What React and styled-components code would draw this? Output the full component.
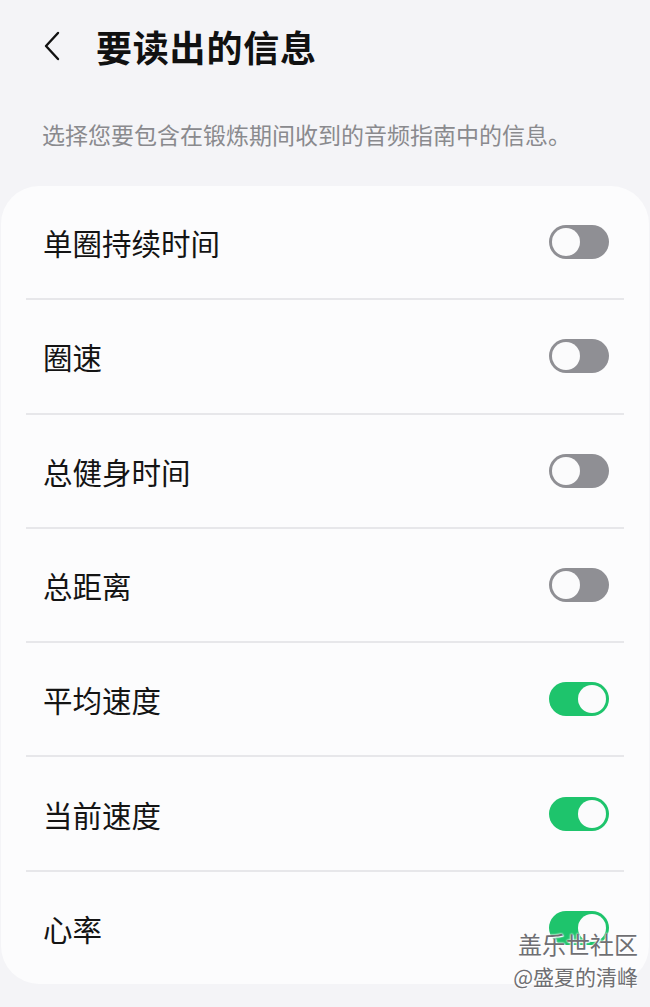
import React, { useState } from 'react';
import styled, { createGlobalStyle } from 'styled-components';

const ITEMS = [
  { id: 1, label: '单圈持续时间', on: false },
  { id: 2, label: '圈速', on: false },
  { id: 3, label: '总健身时间', on: false },
  { id: 4, label: '总距离', on: false },
  { id: 5, label: '平均速度', on: true },
  { id: 6, label: '当前速度', on: true },
  { id: 7, label: '心率', on: true },
];

function App() {
  const [items, setItems] = useState(ITEMS);

  const toggle = id => {
    setItems(prev => prev.map(el => (el.id === id ? { ...el, on: !el.on } : el)));
  };

  return (
    <Page>
      <GlobalStyle />
      <Header>
        <BackButton aria-label="返回">
          <svg width="18" height="30" viewBox="0 0 18 30" fill="none">
            <path d="M15 2 L3 15 L15 28" stroke="#111" strokeWidth="2.4" strokeLinecap="round" strokeLinejoin="round" />
          </svg>
        </BackButton>
        <Title>要读出的信息</Title>
      </Header>

      <Description>选择您要包含在锻炼期间收到的音频指南中的信息。</Description>

      <Card>
        {items.map((el, i) => (
          <Row key={el.id} $last={i === items.length - 1}>
            <Label>{el.label}</Label>
            <Switch $on={el.on} onClick={() => toggle(el.id)}>
              <Knob $on={el.on} />
            </Switch>
          </Row>
        ))}
      </Card>

      <Watermark>
        <WatermarkTitle>盖乐世社区</WatermarkTitle>
        <WatermarkUser>@盛夏的清峰</WatermarkUser>
      </Watermark>
    </Page>
  );
}

const GlobalStyle = createGlobalStyle`
  html, body {
    margin: 0;
    padding: 0;
    background: #f4f4f7;
  }
  body {
    font-family: "Noto Sans CJK SC", "Noto Sans", sans-serif;
  }
`;

const Page = styled.div`
  position: relative;
  width: 650px;
  height: 1007px;
  overflow: hidden;
  background: #f4f4f7;
`;

const Header = styled.div`
  display: flex;
  align-items: center;
  height: 92px;
  padding-left: 43px;
  box-sizing: border-box;
`;

const BackButton = styled.div`
  display: flex;
  align-items: center;
  width: 53px;
  height: 40px;
`;

const Title = styled.h1`
  margin: 0;
  font-size: 36px;
  font-weight: 700;
  color: #111;
  letter-spacing: 0.8px;
`;

const Description = styled.p`
  margin: 0;
  padding: 25px 0 0 42px;
  box-sizing: border-box;
  height: 94px;
  font-size: 23px;
  color: #8a8a8e;
`;

const Card = styled.div`
  margin: 0 1px;
  background: #fcfcfd;
  border-radius: 38px;
`;

const Row = styled.div`
  position: relative;
  display: flex;
  align-items: center;
  justify-content: space-between;
  height: 112.3px;
  padding: 0 40px 0 42px;
  border-bottom: ${({ $last }) => ($last ? 'none' : '2px solid transparent')};

  &::after {
    content: '';
    display: ${({ $last }) => ($last ? 'none' : 'block')};
    position: absolute;
    left: 25px;
    right: 25px;
    bottom: -2px;
    height: 2px;
    background: #e7e7ea;
  }
`;

const Label = styled.span`
  font-size: 29.5px;
  color: #141414;
`;

const Switch = styled.div`
  position: relative;
  width: 60px;
  height: 34px;
  border-radius: 17px;
  background: ${({ $on }) => ($on ? '#1ec46c' : '#8f8f94')};
  cursor: pointer;
`;

const Knob = styled.div`
  position: absolute;
  top: 3px;
  left: ${({ $on }) => ($on ? '29px' : '3px')};
  width: 28px;
  height: 28px;
  border-radius: 50%;
  background: #fbfbfc;
`;

const Watermark = styled.div`
  position: absolute;
  right: 12px;
  bottom: 15px;
  display: flex;
  flex-direction: column;
  align-items: flex-end;
  color: #6f6f73;
  text-shadow: 0 0 2px #fff, 0 0 2px #fff, 1px 1px 1px #fff;
`;

const WatermarkTitle = styled.span`
  font-size: 24px;
  line-height: 32px;
`;

const WatermarkUser = styled.span`
  font-size: 21px;
  line-height: 32px;
`;

export default App;
